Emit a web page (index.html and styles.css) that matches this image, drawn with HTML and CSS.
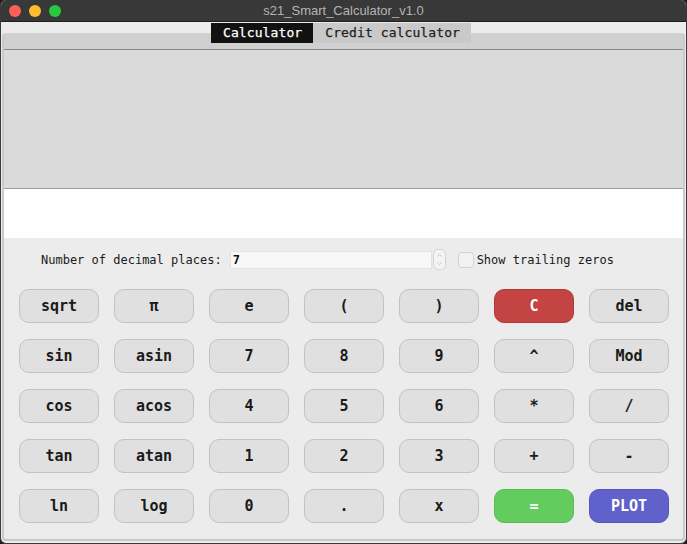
FILE: index.html
```html
<!DOCTYPE html>
<html>
<head>
<meta charset="utf-8">
<link rel="stylesheet" href="styles.css">
</head>
<body>
<div class="window">
  <div class="titlebar">
    <div class="lights">
      <span class="light red"></span>
      <span class="light yellow"></span>
      <span class="light green"></span>
    </div>
    <div class="title">s21_Smart_Calculator_v1.0</div>
  </div>
  <div class="tabwidget">
    <div class="tabs">
      <div class="tab active">Calculator</div>
      <div class="tab">Credit calculator</div>
    </div>
    <div class="pane">
      <div class="display"></div>
      <div class="input-line"></div>
      <div class="settings">
        <span class="label">Number of decimal places:</span>
        <div class="spinbox">
          <div class="spin-field">7</div>
          <div class="spin-arrows">
            <svg width="13" height="21" viewBox="0 0 13 21"><path d="M4.5 7.5 L6.5 5.5 L8.5 7.5" fill="none" stroke="#c4c4c4" stroke-width="1"/><path d="M4.5 13.5 L6.5 15.5 L8.5 13.5" fill="none" stroke="#c4c4c4" stroke-width="1"/></svg>
          </div>
        </div>
        <span class="checkbox"></span>
        <span class="label">Show trailing zeros</span>
      </div>
      <div class="keys">
        <button class="key">sqrt</button>
        <button class="key">π</button>
        <button class="key">e</button>
        <button class="key">(</button>
        <button class="key">)</button>
        <button class="key clear">C</button>
        <button class="key">del</button>

        <button class="key">sin</button>
        <button class="key">asin</button>
        <button class="key">7</button>
        <button class="key">8</button>
        <button class="key">9</button>
        <button class="key">^</button>
        <button class="key">Mod</button>

        <button class="key">cos</button>
        <button class="key">acos</button>
        <button class="key">4</button>
        <button class="key">5</button>
        <button class="key">6</button>
        <button class="key">*</button>
        <button class="key">/</button>

        <button class="key">tan</button>
        <button class="key">atan</button>
        <button class="key">1</button>
        <button class="key">2</button>
        <button class="key">3</button>
        <button class="key">+</button>
        <button class="key">-</button>

        <button class="key">ln</button>
        <button class="key">log</button>
        <button class="key">0</button>
        <button class="key">.</button>
        <button class="key">x</button>
        <button class="key equals">=</button>
        <button class="key plot">PLOT</button>
      </div>
    </div>
  </div>
</div>
</body>
</html>
```

FILE: styles.css
```css
* { box-sizing: border-box; }
html, body {
  margin: 0;
  padding: 0;
  background: #1c1c1c;
}
.window {
  width: 687px;
  height: 544px;
  background: #ececec;
  border: 1px solid #3a3a3a;
  border-top: none;
  border-radius: 6px 6px 6px 6px;
  overflow: hidden;
  display: flex;
  flex-direction: column;
}
.titlebar {
  height: 22px;
  background: #383838;
  border-bottom: 1px solid #1f1f1f;
  display: flex;
  align-items: center;
  position: relative;
}
.lights {
  display: flex;
  gap: 8px;
  padding-left: 8px;
}
.light {
  width: 12px;
  height: 12px;
  border-radius: 50%;
  display: block;
}
.red { background: #fe5f57; }
.yellow { background: #febc2e; }
.green { background: #28c840; }
.title {
  position: absolute;
  left: 0;
  right: 0;
  top: 0;
  line-height: 22px;
  text-align: center;
  font-family: "Liberation Sans", Arial, sans-serif;
  font-size: 13px;
  color: #b4b4b4;
}
.tabwidget {
  flex: 1;
  display: flex;
  flex-direction: column;
  padding-top: 1px;
}
.tabs {
  display: flex;
  justify-content: center;
  padding-right: 5px;
  height: 20px;
  position: relative;
  z-index: 1;
}
.tab {
  font-family: "DejaVu Sans Mono", monospace;
  font-size: 13px;
  line-height: 20px;
  padding: 0 11px 0 12px;
  background: #c9c9c9;
  color: #1e1e1e;
  letter-spacing: 0.1px;
  -webkit-text-stroke: 0.25px currentColor;
}
.tab.active {
  background: #111111;
  color: #ffffff;
}
.pane {
  flex: 1;
  margin: -10px 1px 2px 1px;
  border-left: 2px solid #cacaca;
  border-right: 2px solid #cacaca;
  border-bottom: 2px solid #cacaca;
  border-radius: 4px 4px 4px 4px;
  background: linear-gradient(#d0d0d0 0, #d0d0d0 16px, #ececec 16px);
  padding-top: 16px;
  display: flex;
  flex-direction: column;
}
.display {
  height: 140px;
  background: #dadada;
  border-top: 1px solid #888888;
  border-bottom: 1px solid #9d9d9d;
}
.input-line {
  height: 49px;
  background: #ffffff;
}
.settings {
  display: flex;
  align-items: center;
  height: 21px;
  margin-top: 11px;
  padding-left: 37px;
}
.label {
  font-family: "DejaVu Sans Mono", monospace;
  font-size: 12px;
  color: #1a1a1a;
}
.spinbox {
  display: flex;
  align-items: center;
  margin-left: 8px;
}
.spin-field {
  width: 202px;
  height: 18px;
  background: #f8f8f8;
  border: 1px solid #e3e3e3;
  font-family: "DejaVu Sans Mono", monospace;
  font-size: 12px;
  font-weight: bold;
  line-height: 16px;
  padding-left: 2px;
  color: #111;
}
.spin-arrows {
  width: 13px;
  height: 21px;
  margin-left: 1px;
  border: 1px solid #d4d4d4;
  border-radius: 5px;
  background: #f4f4f4;
  display: flex;
  align-items: center;
  justify-content: center;
  overflow: hidden;
}
.spin-arrows svg { display: block; flex: none; }
.checkbox {
  width: 16px;
  height: 16px;
  border: 1px solid #d2d2d2;
  border-radius: 4px;
  background: #f2f2f2;
  margin-left: 12px;
  margin-right: 3px;
}
.keys {
  display: grid;
  grid-template-columns: repeat(7, 80px);
  grid-auto-rows: 34px;
  column-gap: 15px;
  row-gap: 16px;
  padding-left: 15px;
  margin-top: 19px;
}
.key {
  font-family: "DejaVu Sans Mono", monospace;
  font-size: 15px;
  font-weight: bold;
  color: #1a1a1a;
  background: #e0e0e0;
  border: 1px solid #c2c2c2;
  border-radius: 10px;
  padding: 0;
  margin: 0;
}
.key.clear {
  background: #c44343;
  border-color: #b13b3b;
  color: #ffffff;
}
.key.equals {
  background: #63cc5e;
  border-color: #5abb55;
  color: #ffffff;
}
.key.plot {
  background: #6161cc;
  border-color: #5757bb;
  color: #ffffff;
}
```
